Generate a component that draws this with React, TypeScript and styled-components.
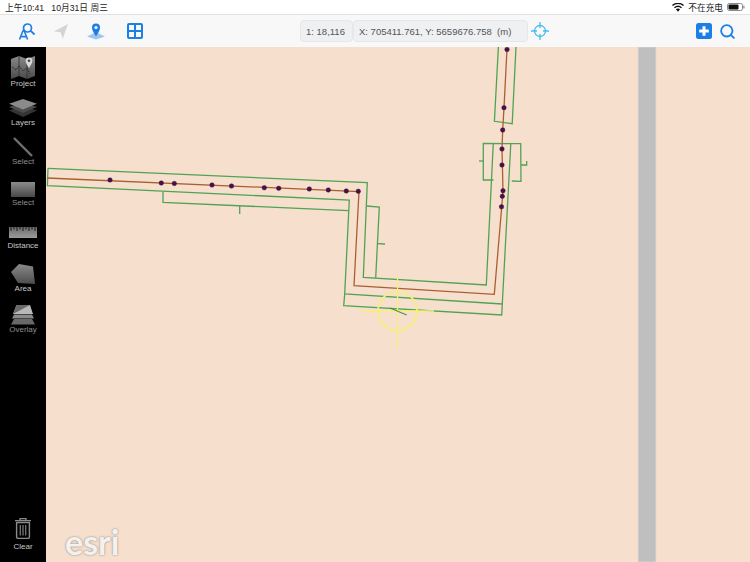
import * as React from "react";
import styled, { createGlobalStyle } from "styled-components";
import { Search } from "lucide-react";

const GlobalStyle = createGlobalStyle`
  html, body {
    margin: 0;
    padding: 0;
    width: 750px;
    height: 562px;
    overflow: hidden;
    background: #fff;
  }
  * {
    box-sizing: border-box;
  }
`;

const SPage = styled.div`
  width: 750px;
  height: 562px;
  display: flex;
  flex-direction: column;
  font-family: "Liberation Sans", Arial, sans-serif;
`;

const SStatusBar = styled.div`
  height: 14px;
  flex: none;
  background: #fff;
  display: flex;
  align-items: center;
  justify-content: space-between;
  padding: 0 5px;
  color: #222;
  font-family: "Liberation Sans", "Noto Sans CJK SC", sans-serif;
  font-size: 8.7px;
  white-space: pre;
`;

const SStatusRight = styled.div`
  display: flex;
  align-items: center;
  gap: 4px;
`;

const SToolbar = styled.div`
  height: 33px;
  flex: none;
  background: #f8f8f9;
  border-top: 1px solid #e2e2e4;
  display: flex;
  align-items: center;
  padding: 0 14px 0 18px;
`;

const SToolIcon = styled.div<{ $width: number }>`
  width: ${({ $width }) => $width}px;
  flex: none;
  display: flex;
  align-items: center;
`;

const SChips = styled.div`
  display: flex;
  align-items: center;
  margin-left: 148px;
  margin-right: 3px;
`;

const SChip = styled.div<{ $width: number }>`
  width: ${({ $width }) => $width}px;
  height: 22px;
  background: #eff0f2;
  border: 1px solid #e6e7ea;
  border-radius: 4px;
  display: flex;
  align-items: center;
  padding-left: 5px;
  color: #555;
  font-size: 9.5px;
  white-space: pre;
`;

const SToolbarRight = styled.div`
  margin-left: auto;
  display: flex;
  align-items: center;
  gap: 7px;
`;

const SBody = styled.div`
  flex: 1;
  min-height: 0;
  display: flex;
`;

const SSidebar = styled.div`
  width: 46px;
  flex: none;
  background: #000;
  display: flex;
  flex-direction: column;
  padding-top: 1px;
`;

const SSideItem = styled.div<{ $height: number; $gap: number }>`
  height: ${({ $height }) => $height}px;
  flex: none;
  display: flex;
  flex-direction: column;
  align-items: center;
  justify-content: flex-end;
  gap: ${({ $gap }) => $gap}px;
  padding-bottom: 2px;
`;

const SSideLabel = styled.div<{ $dim?: boolean }>`
  font-size: 8px;
  line-height: 10px;
  color: ${({ $dim }) => ($dim ? "#8f8f8f" : "#c6c6c6")};
`;

const SClearItem = styled(SSideItem)`
  margin-top: auto;
  padding-bottom: 10px;
`;

const SMap = styled.div`
  position: relative;
  flex: 1;
  min-width: 0;
  background: #f7dfcd;
  overflow: hidden;
`;

const SMapSvg = styled.svg`
  display: block;
  width: 704px;
  height: 515px;
`;

const SEsri = styled.div`
  position: absolute;
  left: 19px;
  bottom: 0;
  font-family: Lato, "Open Sans", sans-serif;
  font-size: 34px;
  font-weight: 700;
  color: #f4f2f0;
  text-shadow: 0 0 2px rgba(90, 90, 90, 0.8);
`;

const BLUE = "#1b7fe6";

const greenLines = [
  "163,192 163,202.3 348.5,210.7",
  "48,168.3 47.4,185.7 349.3,200 344.7,294 502.3,304",
  "48,168.3 367.3,182.7 363.3,277.4 486.3,285 493.3,143.3",
  "510.8,143.5 501.7,315 343.7,305.7 344.7,294",
  "498.4,47 494.4,121.3 512.2,123.7 516,47",
  "493.5,180 483.3,180 483.3,143.3 520.7,143.7 521,181.4 511.8,181",
  "366.7,206 379.3,207 375.7,277.8",
  "377.7,243.7 385,244",
  "239.7,206 239.7,214",
  "479,161 483.3,161",
  "521,165 526.7,165 526.7,161",
];

const routeLine =
  "47,178 359,191.5 354,285.7 494.3,294.3 501.7,207 503,190.7 502,149 502.7,130 504,107.7 507,49";

const dots: [number, number][] = [
  [110, 180],
  [161.3, 183],
  [174.3, 183.5],
  [212, 185],
  [231.5, 186],
  [264.3, 187.7],
  [278.7, 188.3],
  [309.3, 189],
  [328.3, 190],
  [346.3, 191],
  [358.3, 191.3],
  [507, 49.5],
  [504, 107.7],
  [502.7, 130],
  [502, 149],
  [502, 165],
  [503, 190.7],
  [502.3, 196.3],
  [501.5, 206.8],
];

const MapDrawing = () => (
  <SMapSvg viewBox="46 47 704 515">
    <rect x="638" y="47" width="18" height="515" fill="#bfbfbf" stroke="#e4d9d0" strokeWidth="0.8" />
    {greenLines.map((points) => (
      <polyline key={points} points={points} fill="none" stroke="#4fa353" strokeWidth="1.3" />
    ))}
    <polyline points={routeLine} fill="none" stroke="#a9602f" strokeWidth="1.3" />
    {dots.map(([x, y]) => (
      <circle key={`${x}-${y}`} cx={x} cy={y} r="2.3" fill="#4b0d4c" stroke="#2e2230" strokeWidth="0.4" />
    ))}
    <g fill="none" stroke="#f4f07a" strokeWidth="1.3">
      <circle cx="397.5" cy="311" r="19.5" strokeWidth="1.7" />
      <line x1="397.5" y1="277" x2="397.5" y2="347" />
      <line x1="361" y1="311" x2="434" y2="311" />
    </g>
    <line x1="390" y1="308" x2="406.7" y2="315" stroke="#4f8f58" strokeWidth="1.2" />
  </SMapSvg>
);

const WifiIcon = () => (
  <svg width="12" height="9" viewBox="0 0 12 9">
    <path d="M6 8.8 3.9 6.3a3.2 3.2 0 0 1 4.2 0Z" fill="#111" />
    <path d="M2.9 5.2a4.8 4.8 0 0 1 6.2 0l.9-1a6.2 6.2 0 0 0-8 0Z" fill="#111" />
    <path d="M.9 3a7.6 7.6 0 0 1 10.2 0l.9-1A9 9 0 0 0 0 2Z" fill="#111" />
  </svg>
);

const BatteryIcon = () => (
  <svg width="18" height="8" viewBox="0 0 18 8">
    <rect x="0.5" y="0.5" width="15" height="7" rx="1.8" fill="none" stroke="#888" />
    <rect x="1.5" y="1.5" width="10" height="5" rx="1" fill="#111" />
    <rect x="16.3" y="2.6" width="1.2" height="2.8" rx="0.5" fill="#888" />
  </svg>
);

const PersonAIcon = () => (
  <svg width="18" height="18" viewBox="0 0 18 18">
    <circle cx="9.5" cy="6" r="4" fill="none" stroke={BLUE} strokeWidth="1.7" />
    <path d="M13 9.2 16 12" stroke={BLUE} strokeWidth="1.8" strokeLinecap="round" />
    <path d="M1.5 17.5 5 8.8h1.2l3.4 8.7M3 14.6h5" fill="none" stroke={BLUE} strokeWidth="1.6" />
  </svg>
);

const NavArrowIcon = () => (
  <svg width="16" height="16" viewBox="0 0 16 16">
    <path d="M15 1 1 8.6l6.6.6 2.2 6.3Z" fill="#d3d4d6" />
  </svg>
);

const PinIcon = () => (
  <svg width="20" height="18" viewBox="0 0 20 18">
    <path d="M10 10 19 14.5 10 17.6 1 14.5Z" fill="#9cc6f0" />
    <path d="M10 14.5C8 11 6 8.8 6 5.6a4 4 0 0 1 8 0C14 8.8 12 11 10 14.5Z" fill={BLUE} />
    <circle cx="10" cy="5.5" r="1.6" fill="#fff" />
  </svg>
);

const GridIcon = () => (
  <svg width="16" height="16" viewBox="0 0 16 16">
    <rect x="1" y="1" width="14" height="14" rx="1" fill="none" stroke={BLUE} strokeWidth="2" />
    <path d="M8 1v14M1 8h14" stroke={BLUE} strokeWidth="2" />
  </svg>
);

const TargetIcon = () => (
  <svg width="18" height="18" viewBox="0 0 18 18">
    <circle cx="9" cy="9" r="5.5" fill="none" stroke="#45bdf0" strokeWidth="1.3" />
    <path d="M9 0v6M9 12v6M0 9h6M12 9h6" stroke="#45bdf0" strokeWidth="1.3" />
  </svg>
);

const PlusButton = () => (
  <svg width="16" height="16" viewBox="0 0 16 16">
    <rect width="16" height="16" rx="2.5" fill={BLUE} />
    <path d="M8 3.2v9.6M3.2 8h9.6" stroke="#fff" strokeWidth="3" />
  </svg>
);

const GrayGradient = ({ id, from, to }: { id: string; from: string; to: string }) => (
  <linearGradient id={id} x1="0" y1="0" x2="0" y2="1">
    <stop offset="0" stopColor={from} />
    <stop offset="1" stopColor={to} />
  </linearGradient>
);

const ProjectIcon = () => (
  <svg width="24" height="24" viewBox="0 0 24 24">
    <defs>
      <GrayGradient id="proj" from="#8a8a8a" to="#4a4a4a" />
    </defs>
    <path d="M0 4 8 1l8 3 8-3v20l-8 3-8-3-8 3Z" fill="url(#proj)" />
    <path d="M8 1v20M16 4v20" stroke="#2e2e2e" strokeWidth="0.8" />
    <path d="M1 12l4 3 3-4 4 5 4-3 3 6" fill="none" stroke="#222" strokeWidth="0.9" strokeDasharray="2 1" />
    <path d="M18 13c-1.6-3-3.4-4.6-3.4-7.2a3.4 3.4 0 0 1 6.8 0c0 2.6-1.8 4.2-3.4 7.2Z" fill="#d8d8d8" />
    <circle cx="18" cy="5.8" r="1.3" fill="#444" />
  </svg>
);

const LayersIcon = () => (
  <svg width="28" height="18" viewBox="0 0 28 18">
    <path d="M14 7 28 11.5 14 18 0 11.5Z" fill="#343434" />
    <path d="M14 3.5 28 8 14 14 0 8Z" fill="#4c4c4c" />
    <path d="M14 0 28 4.8 14 10.5 0 4.8Z" fill="#8a8a8a" />
  </svg>
);

const SelectLineIcon = () => (
  <svg width="20" height="20" viewBox="0 0 20 20">
    <line x1="1" y1="1" x2="19" y2="19" stroke="#6f6f6f" strokeWidth="2.4" />
  </svg>
);

const SelectRectIcon = () => (
  <svg width="24" height="15" viewBox="0 0 24 15">
    <defs>
      <GrayGradient id="rect" from="#8c8c8c" to="#484848" />
    </defs>
    <rect width="24" height="15" fill="url(#rect)" />
  </svg>
);

const RulerIcon = () => (
  <svg width="28" height="11" viewBox="0 0 28 11">
    <defs>
      <GrayGradient id="ruler" from="#6c6c6c" to="#9a9a9a" />
    </defs>
    <rect width="28" height="11" fill="url(#ruler)" />
    <path
      d="M2 0v4M5 0v2.5M8 0v4M11 0v2.5M14 0v4M17 0v2.5M20 0v4M23 0v2.5M26 0v4"
      stroke="#111"
      strokeWidth="0.9"
    />
  </svg>
);

const AreaIcon = () => (
  <svg width="24" height="20" viewBox="0 0 24 20">
    <defs>
      <GrayGradient id="area" from="#8a8a8a" to="#4c4c4c" />
    </defs>
    <path d="M0 8 8 0l14 2.5L24 20 7 19Z" fill="url(#area)" />
  </svg>
);

const OverlayIcon = () => (
  <svg width="24" height="20" viewBox="0 0 24 20">
    <path d="M3 14h18l3 5.5H0Z" fill="#686868" />
    <path d="M3 9.5h18l2 4H1Z" fill="#8a8a8a" />
    <path d="M5.5 0H19l3 9H2Z" fill="#b8b8b8" />
    <path d="M5.5 0H19L2 9Z" fill="#6a6a6a" />
  </svg>
);

const TrashIcon = () => (
  <svg width="16" height="21" viewBox="0 0 16 21">
    <path d="M5 2V.7h6V2M0 2.6h16" fill="none" stroke="#8a8a8a" strokeWidth="1.3" />
    <path d="M1.6 4.5h12.8V19a1.4 1.4 0 0 1-1.4 1.4H3A1.4 1.4 0 0 1 1.6 19Z" fill="none" stroke="#8a8a8a" strokeWidth="1.4" />
    <path d="M5.3 7v10.5M8 7v10.5M10.7 7v10.5" stroke="#777" strokeWidth="1.3" />
  </svg>
);

const sideItems = [
  { label: "Project", height: 43, gap: 0, icon: <ProjectIcon /> },
  { label: "Layers", height: 39, gap: 1, icon: <LayersIcon /> },
  { label: "Select", height: 39, gap: 0, dim: true, icon: <SelectLineIcon /> },
  { label: "Select", height: 41, gap: 1, dim: true, icon: <SelectRectIcon /> },
  { label: "Distance", height: 43, gap: 3, icon: <RulerIcon /> },
  { label: "Area", height: 43, gap: 0, icon: <AreaIcon /> },
  { label: "Overlay", height: 41, gap: 0, dim: true, icon: <OverlayIcon /> },
];

const App = () => (
  <SPage>
    <GlobalStyle />
    <SStatusBar>
      <span>{"上午10:41   10月31日 周三"}</span>
      <SStatusRight>
        <WifiIcon />
        <span>不在充电</span>
        <BatteryIcon />
      </SStatusRight>
    </SStatusBar>
    <SToolbar>
      <SToolIcon $width={35}>
        <PersonAIcon />
      </SToolIcon>
      <SToolIcon $width={33}>
        <NavArrowIcon />
      </SToolIcon>
      <SToolIcon $width={41}>
        <PinIcon />
      </SToolIcon>
      <SToolIcon $width={25}>
        <GridIcon />
      </SToolIcon>
      <SChips>
        <SChip $width={53}>1: 18,116</SChip>
        <SChip $width={175}>{"X: 705411.761, Y: 5659676.758  (m)"}</SChip>
      </SChips>
      <TargetIcon />
      <SToolbarRight>
        <PlusButton />
        <Search size={17} color={BLUE} strokeWidth={2.6} />
      </SToolbarRight>
    </SToolbar>
    <SBody>
      <SSidebar>
        {sideItems.map((item, i) => (
          <SSideItem key={i} $height={item.height} $gap={item.gap}>
            {item.icon}
            <SSideLabel $dim={item.dim}>{item.label}</SSideLabel>
          </SSideItem>
        ))}
        <SClearItem $height={60} $gap={3}>
          <TrashIcon />
          <SSideLabel>Clear</SSideLabel>
        </SClearItem>
      </SSidebar>
      <SMap>
        <MapDrawing />
        <SEsri>esri</SEsri>
      </SMap>
    </SBody>
  </SPage>
);

export default App;
